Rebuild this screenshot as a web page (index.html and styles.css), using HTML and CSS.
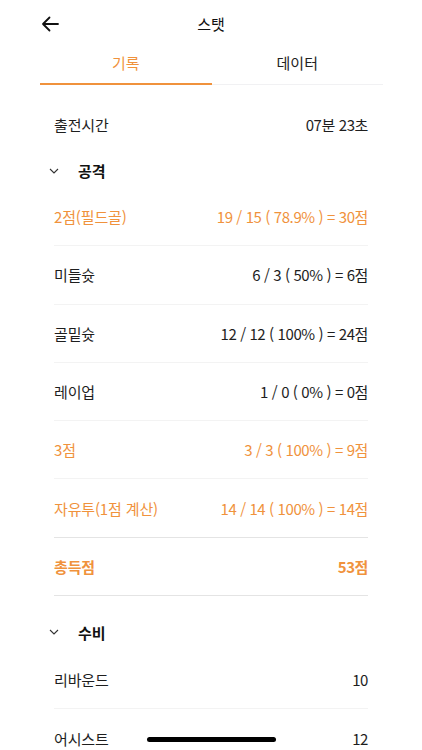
FILE: index.html
```html
<!DOCTYPE html>
<html lang="ko">
<head>
<meta charset="utf-8">
<link rel="stylesheet" href="styles.css">
</head>
<body>
<div class="screen">
  <header class="topbar">
    <button class="back" aria-label="back">
      <svg width="18" height="16" viewBox="0 0 18 16"><path d="M17 8H2M8.5 1.5L2 8l6.5 6.5" fill="none" stroke="#111" stroke-width="1.8" stroke-linecap="round" stroke-linejoin="round"/></svg>
    </button>
    <div class="title">스탯</div>
  </header>
  <nav class="tabs">
    <div class="tab active">기록</div>
    <div class="tab">데이터</div>
  </nav>
  <main class="content">
    <div class="row first"><span>출전시간</span><span class="val">07분 23초</span></div>
    <div class="section-head">
      <svg class="chev" width="10" height="6" viewBox="0 0 10 6"><path d="M1 1l4 4 4-4" fill="none" stroke="#333" stroke-width="1.1"/></svg>
      <span>공격</span>
    </div>
    <div class="row orange"><span>2점(필드골)</span><span class="val">19 / 15 ( 78.9% ) = 30점</span></div>
    <div class="row"><span>미들슛</span><span class="val">6 / 3 ( 50% ) = 6점</span></div>
    <div class="row"><span>골밑슛</span><span class="val">12 / 12 ( 100% ) = 24점</span></div>
    <div class="row"><span>레이업</span><span class="val">1 / 0 ( 0% ) = 0점</span></div>
    <div class="row orange"><span>3점</span><span class="val">3 / 3 ( 100% ) = 9점</span></div>
    <div class="row orange strong-line"><span>자유투(1점 계산)</span><span class="val">14 / 14 ( 100% ) = 14점</span></div>
    <div class="row orange total strong-line"><span>총득점</span><span class="val">53점</span></div>
    <div class="section-head defense">
      <svg class="chev" width="10" height="6" viewBox="0 0 10 6"><path d="M1 1l4 4 4-4" fill="none" stroke="#333" stroke-width="1.1"/></svg>
      <span>수비</span>
    </div>
    <div class="row"><span>리바운드</span><span class="val">10</span></div>
    <div class="row"><span>어시스트</span><span class="val">12</span></div>
  </main>
  <div class="home-indicator"></div>
</div>
</body>
</html>
```

FILE: styles.css
```css
* { box-sizing: border-box; }
html, body { margin: 0; padding: 0; background: #fff; }
body {
  font-family: "Noto Sans CJK KR", "Noto Sans", sans-serif;
  color: #1e1e1e;
  font-size: 15px;
}
.screen {
  position: relative;
  width: 422px;
  height: 750px;
  overflow: hidden;
}
.topbar {
  position: relative;
  height: 47px;
  display: flex;
  align-items: center;
  justify-content: center;
}
.back {
  position: absolute;
  left: 41px;
  top: 16px;
  border: 0;
  background: none;
  padding: 0;
  width: 20px;
  height: 16px;
  display: flex;
  align-items: center;
}
.title {
  font-size: 15px;
  color: #111;
}
.tabs {
  margin: 0 39px 0 40px;
  display: flex;
  height: 38px;
  border-bottom: 1px solid #f1f1f3;
}
.tab {
  flex: 1;
  display: flex;
  align-items: center;
  justify-content: center;
  padding-bottom: 6px;
  font-size: 15px;
  color: #222;
}
.tab.active {
  color: #f0923c;
  border-bottom: 2px solid #f0923c;
  margin-bottom: -1px;
}
.content {
  padding: 10px 54px 0 54px;
}
.row {
  display: flex;
  justify-content: space-between;
  align-items: center;
  height: 58.3px;
  border-bottom: 1px solid #f3f3f3;
  font-size: 15px;
  color: #1e1e1e;
  letter-spacing: -0.15px;
}
.row .val { letter-spacing: -0.4px; }
.row.first {
  height: 58px;
  border-bottom: 0;
}
.row.orange { color: #f0923c; }
.row.strong-line { border-bottom-color: #e4e4e4; }
.row.total { font-weight: 700; }
.section-head {
  display: flex;
  align-items: center;
  height: 35px;
  font-weight: 700;
  font-size: 15px;
  color: #111;
}
.section-head .chev {
  margin-left: -5px;
  margin-right: 19px;
}
.section-head.defense {
  margin-top: 17px;
  height: 38px;
}
.home-indicator {
  position: absolute;
  left: 147px;
  bottom: 8px;
  width: 129px;
  height: 5px;
  border-radius: 3px;
  background: #000;
}
```
